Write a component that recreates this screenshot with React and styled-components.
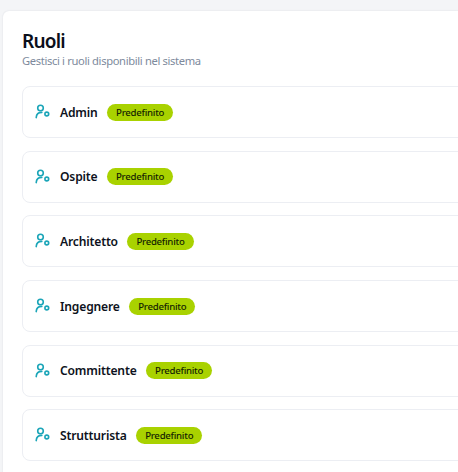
import styled, { createGlobalStyle } from 'styled-components'

const roles = ['Admin', 'Ospite', 'Architetto', 'Ingegnere', 'Committente', 'Strutturista']

const GlobalStyle = createGlobalStyle`
    html, body {
        margin: 0;
        height: 100%;
        overflow: hidden;
        background: #f4f5f7;
        font-family: "Noto Sans", "Open Sans", sans-serif;
    }
`

const Page = styled.div`
    width: 458px;
    height: 472px;
    padding: 11px 0 0 3px;
    box-sizing: border-box;
    overflow: hidden;
`

const Card = styled.section`
    height: 461px;
    box-sizing: border-box;
    padding: 19px 0 0 19px;
    background: #fff;
    border-radius: 6px 0 0 0;
    box-shadow: 0 0 2px rgba(30, 40, 70, 0.12);
`

const Title = styled.h1`
    margin: 0;
    font-size: 19px;
    line-height: 23px;
    font-weight: 600;
    letter-spacing: -0.8px;
    color: #0b0f1a;
`

const Subtitle = styled.p`
    margin: 0 0 17px;
    font-size: 11.2px;
    line-height: 16px;
    letter-spacing: -0.35px;
    color: #7d8a9c;
`

const List = styled.div`
    display: flex;
    flex-direction: column;
    gap: 12.7px;
    margin-right: -20px;
`

const Row = styled.div`
    display: flex;
    align-items: center;
    height: 52px;
    box-sizing: border-box;
    padding-left: 12px;
    border: 1px solid #eceef3;
    border-radius: 8px;
    background: #fff;
`

const IconBox = styled.svg`
    width: 16px;
    height: 16px;
    margin-right: 9px;
    flex: none;
    fill: none;
    stroke: #1ba5b8;
    stroke-width: 1.6;
    stroke-linecap: round;
`

const Name = styled.span`
    font-size: 12.1px;
    font-weight: 600;
    letter-spacing: -0.17px;
    color: #0d1220;
    margin-right: 9.5px;
`

const Badge = styled.span`
    display: inline-flex;
    align-items: center;
    height: 17px;
    padding: 0 9px;
    border-radius: 9px;
    background: #a9d200;
    color: #141f02;
    font-size: 9.6px;
    font-weight: 500;
    letter-spacing: -0.25px;
`

const RoleIcon = () => (
    <IconBox viewBox="0 0 16 16">
        <circle cx="5.5" cy="4" r="2.8" />
        <path d="M1.2 13.6c.2-3 2.4-5.2 5.6-5.2" />
        <circle cx="11.8" cy="10" r="1.9" />
    </IconBox>
)

export default function App() {
    return (
        <Page>
            <GlobalStyle />
            <Card>
                <Title>Ruoli</Title>
                <Subtitle>Gestisci i ruoli disponibili nel sistema</Subtitle>
                <List>
                    {roles.map(role => (
                        <Row key={role}>
                            <RoleIcon />
                            <Name>{role}</Name>
                            <Badge>Predefinito</Badge>
                        </Row>
                    ))}
                </List>
            </Card>
        </Page>
    )
}
